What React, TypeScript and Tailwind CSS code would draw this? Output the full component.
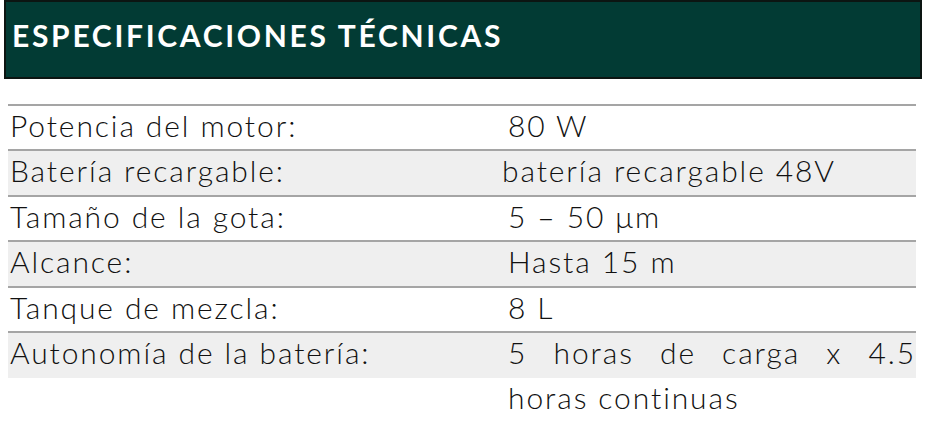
const specs = [
  { label: 'Potencia del motor:', value: '80 W', shade: false },
  { label: 'Batería recargable:', value: 'batería recargable 48V', shade: true, tight: true },
  { label: 'Tamaño de la gota:', value: '5 – 50 μm', shade: false },
  { label: 'Alcance:', value: 'Hasta 15 m', shade: true },
  { label: 'Tanque de mezcla:', value: '8 L', shade: false },
  { label: 'Autonomía de la batería:', value: '5 horas de carga x 4.5 horas continuas', shade: true, last: true },
];

export default function App() {
  return (
    <div className="w-[931px] h-[425px] bg-white overflow-hidden" style={{ fontFamily: 'Lato, "Noto Sans", sans-serif' }}>
      <div className="ml-[4px] w-[918px] h-[79px] bg-[#023b34] border-2 border-[#0c1512] flex items-center pl-[6px] pb-[8px]">
        <h2 className="text-white font-bold text-[30px] tracking-[2.7px]">ESPECIFICACIONES TÉCNICAS</h2>
      </div>

      <div className="mt-[25px] ml-[8px] w-[908px] border-t-2 border-[#a5a5a5] text-[#111] text-[30px] font-light tracking-[1.9px]">
        {specs.map((s) => (
          <div
            key={s.label}
            className={`grid grid-cols-[492px_1fr] h-[45.4px] ${s.last ? '' : 'border-b-2 border-[#a5a5a5]'} ${s.shade ? 'bg-[#efefef]' : ''}`}
          >
            <div className="pl-[2px] -mt-[3px] leading-[45px] whitespace-nowrap">{s.label}</div>
            <div className={`${s.tight ? 'pl-[2px]' : 'pl-[8px]'} -mt-[3px] leading-[45px] ${s.last ? 'text-justify' : 'whitespace-nowrap'}`}>
              {s.value}
            </div>
          </div>
        ))}
      </div>
    </div>
  );
}
